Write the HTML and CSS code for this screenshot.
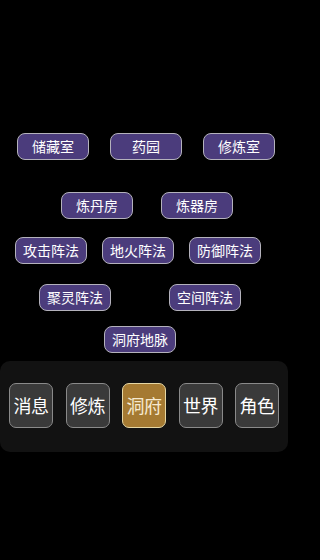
FILE: index.html
```html
<!DOCTYPE html>
<html lang="zh">
<head>
<meta charset="utf-8">
<link rel="stylesheet" href="styles.css">
</head>
<body>
<div class="page">
  <div class="rooms">
    <div class="row r1">
      <div class="btn">储藏室</div>
      <div class="btn">药园</div>
      <div class="btn">修炼室</div>
    </div>
    <div class="row r2">
      <div class="btn">炼丹房</div>
      <div class="btn">炼器房</div>
    </div>
    <div class="row r3">
      <div class="btn">攻击阵法</div>
      <div class="btn">地火阵法</div>
      <div class="btn">防御阵法</div>
    </div>
    <div class="row r4">
      <div class="btn">聚灵阵法</div>
      <div class="btn">空间阵法</div>
    </div>
    <div class="row r5">
      <div class="btn">洞府地脉</div>
    </div>
  </div>
  <div class="panel">
    <div class="tab">消息</div>
    <div class="tab">修炼</div>
    <div class="tab active">洞府</div>
    <div class="tab">世界</div>
    <div class="tab">角色</div>
  </div>
</div>
</body>
</html>
```
FILE: styles.css
```css
html, body {
  margin: 0;
  padding: 0;
  background: #000;
}
body {
  width: 288px;
  height: 560px;
  overflow: hidden;
  font-family: "Noto Sans CJK SC", "Noto Sans", sans-serif;
  color: #fff;
}
.page {
  display: flex;
  flex-direction: column;
}
.rooms {
  padding-top: 133px;
  display: flex;
  flex-direction: column;
}
.row {
  display: flex;
}
.btn {
  box-sizing: border-box;
  width: 72px;
  height: 27px;
  border: 1.5px solid #b4b2bc;
  border-radius: 8px;
  background: #4b3c7c;
  color: #fff;
  font-size: 14px;
  line-height: 24px;
  text-align: center;
}
.r1 { padding-left: 17px; gap: 21px; }
.r2 { padding-left: 61px; gap: 28px; margin-top: 32px; }
.r3 { padding-left: 15px; gap: 15px; margin-top: 18px; }
.r4 { padding-left: 39px; gap: 58px; margin-top: 20px; }
.r5 { padding-left: 104px; margin-top: 15px; }

.panel {
  margin-top: 8px;
  height: 91px;
  background: #121212;
  border-radius: 10px;
  display: flex;
  align-items: flex-start;
  padding: 22px 0 0 9px;
  box-sizing: border-box;
  gap: 12.5px;
}
.tab {
  box-sizing: border-box;
  width: 44px;
  height: 45px;
  border: 1.5px solid #8a8a8a;
  border-radius: 7px;
  background: #3a3a3a;
  color: #fff;
  font-size: 18px;
  line-height: 42px;
  text-align: center;
  letter-spacing: -0.5px;
}
.tab.active {
  background: #a57a32;
  border-color: #e6d7a4;
  color: #f6ead0;
}
```
